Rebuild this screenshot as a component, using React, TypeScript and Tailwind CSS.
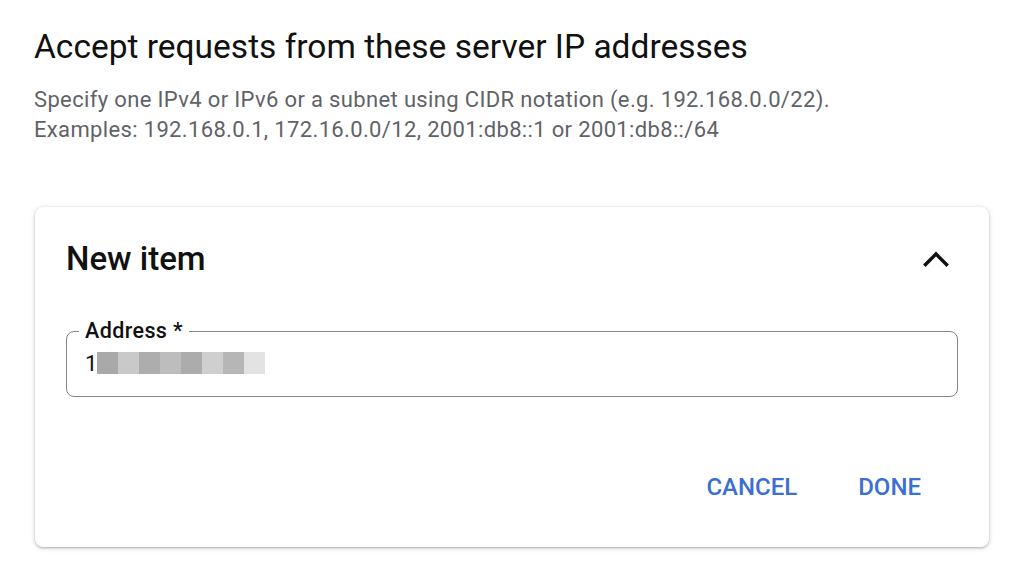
const blur = ["#a9a9a9", "#c9c9c9", "#adadad", "#bdbdbd", "#acacac", "#cfcfcf", "#b6b6b6", "#e3e3e3"];

export default function App() {
  return (
    <div className="w-[1024px] h-[576px] bg-white font-['Roboto',sans-serif] px-[34px] pt-[25px] overflow-hidden">
      <h1 className="text-[33.5px] leading-[44px] text-[#111]">Accept requests from these server IP addresses</h1>
      <div className="mt-[16px] text-[22px] tracking-[0.35px] leading-[30px] text-[#5f6368]">
        <p>Specify one IPv4 or IPv6 or a subnet using CIDR notation (e.g. 192.168.0.0/22).</p>
        <p>Examples: 192.168.0.1, 172.16.0.0/12, 2001:db8::1 or 2001:db8::/64</p>
      </div>

      <div className="mt-[62px] ml-px w-[954px] h-[340px] rounded-lg bg-white shadow-[0_1px_2px_rgba(60,64,67,0.3),0_1px_4px_1px_rgba(60,64,67,0.15)] px-[31px] pt-[30px]">
        <div className="flex items-center justify-between">
          <h2 className="text-[33px] leading-[44px] font-medium text-[#111]">New item</h2>
          <button className="mr-[9px]">
            <svg width="26" height="16" viewBox="0 0 26 16" fill="none" stroke="#111" strokeWidth="3.4" strokeLinecap="square">
              <path d="M2.5 13.5 13 3 23.5 13.5" />
            </svg>
          </button>
        </div>

        <fieldset className="mt-[40px] h-[76px] border border-[#80868b] rounded-lg px-[12px]">
          <legend className="px-[6px] text-[21.5px] leading-[20px] font-medium tracking-[0.4px] text-[#111]">Address *</legend>
          <div className="mt-[11px] ml-[6px] flex items-center h-[22px] text-[22px] text-[#111]">
            <span>1</span>
            <div className="flex h-[22px]">
              {blur.map((c, i) => (
                <span key={i} className="w-[21px] h-full" style={{ backgroundColor: c }} />
              ))}
            </div>
          </div>
        </fieldset>

        <div className="mt-[72px] flex justify-end gap-[29px] pr-[21px]">
          <button className="px-[16px] text-[24px] font-medium text-[#3b6fd4]">CANCEL</button>
          <button className="px-[16px] text-[24px] font-medium text-[#3b6fd4]">DONE</button>
        </div>
      </div>
    </div>
  );
}
